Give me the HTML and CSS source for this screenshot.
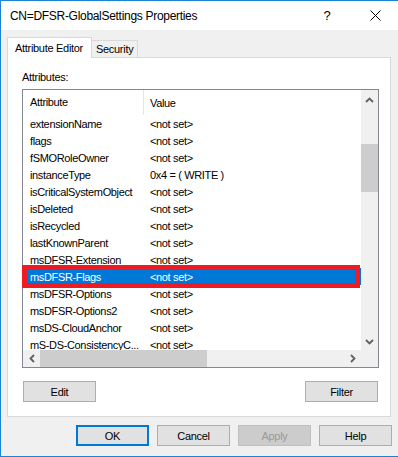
FILE: index.html
```html
<!DOCTYPE html>
<html lang="en">
<head>
  <meta charset="UTF-8">
  <title>CN=DFSR-GlobalSettings Properties</title>
  <link rel="stylesheet" href="styles.css">
</head>
<body>
  <div class="window">
    <!-- Title bar -->
    <div class="titlebar">
      <span class="title">CN=DFSR-GlobalSettings Properties</span>
      <span class="tb-btn tb-help">?</span>
      <span class="tb-btn">
        <svg width="11" height="11" viewBox="0 0 11 11"><path d="M0.5 0.5 L10.5 10.5 M10.5 0.5 L0.5 10.5" stroke="#000" stroke-width="1"/></svg>
      </span>
    </div>

    <div class="body">
      <div class="tabs">
        <div class="tab active">Attribute Editor</div>
        <div class="tab">Security</div>
      </div>

      <div class="panel">
        <div class="label">Attributes:</div>

        <div class="list">
          <div class="list-main">
            <div class="list-head">
              <div class="col-name">Attribute</div>
              <div class="col-value">Value</div>
            </div>
            <div class="rows">
              <div class="row"><div class="col-name">extensionName</div><div class="col-value">&lt;not set&gt;</div></div>
              <div class="row"><div class="col-name">flags</div><div class="col-value">&lt;not set&gt;</div></div>
              <div class="row"><div class="col-name">fSMORoleOwner</div><div class="col-value">&lt;not set&gt;</div></div>
              <div class="row"><div class="col-name">instanceType</div><div class="col-value">0x4 = ( WRITE )</div></div>
              <div class="row"><div class="col-name">isCriticalSystemObject</div><div class="col-value">&lt;not set&gt;</div></div>
              <div class="row"><div class="col-name">isDeleted</div><div class="col-value">&lt;not set&gt;</div></div>
              <div class="row"><div class="col-name">isRecycled</div><div class="col-value">&lt;not set&gt;</div></div>
              <div class="row"><div class="col-name">lastKnownParent</div><div class="col-value">&lt;not set&gt;</div></div>
              <div class="row"><div class="col-name">msDFSR-Extension</div><div class="col-value">&lt;not set&gt;</div></div>
              <div class="row selected"><div class="col-name">msDFSR-Flags</div><div class="col-value">&lt;not set&gt;</div></div>
              <div class="row"><div class="col-name">msDFSR-Options</div><div class="col-value">&lt;not set&gt;</div></div>
              <div class="row"><div class="col-name">msDFSR-Options2</div><div class="col-value">&lt;not set&gt;</div></div>
              <div class="row"><div class="col-name">msDS-CloudAnchor</div><div class="col-value">&lt;not set&gt;</div></div>
              <div class="row"><div class="col-name">mS-DS-ConsistencyC...</div><div class="col-value">&lt;not set&gt;</div></div>
            </div>
          </div>

          <div class="vscroll">
            <div class="sb-arrow up"><svg width="9" height="6" viewBox="0 0 9 6"><polyline points="1,5 4.5,1.5 8,5" fill="none" stroke="#606060" stroke-width="1.8"/></svg></div>
            <div class="sb-thumb-v"></div>
            <div class="sb-fill"></div>
            <div class="sb-arrow down"><svg width="9" height="6" viewBox="0 0 9 6"><polyline points="1,1 4.5,4.5 8,1" fill="none" stroke="#606060" stroke-width="1.8"/></svg></div>
          </div>

          <div class="hscroll">
            <div class="sb-arrow side"><svg width="6" height="9" viewBox="0 0 6 9"><polyline points="5,1 1.5,4.5 5,8" fill="none" stroke="#606060" stroke-width="1.8"/></svg></div>
            <div class="sb-thumb-h"></div>
            <div class="sb-fill"></div>
            <div class="sb-arrow side"><svg width="6" height="9" viewBox="0 0 6 9"><polyline points="1,1 4.5,4.5 1,8" fill="none" stroke="#606060" stroke-width="1.8"/></svg></div>
          </div>

          <div class="corner"></div>

          <!-- red annotation around the selected row -->
          <div class="highlight"></div>
        </div>

        <div class="panel-buttons">
          <button class="btn">Edit</button>
          <button class="btn">Filter</button>
        </div>
      </div>

      <div class="footer">
        <button class="btn default">OK</button>
        <button class="btn">Cancel</button>
        <button class="btn disabled">Apply</button>
        <button class="btn">Help</button>
      </div>
    </div>
  </div>
</body>
</html>
```

FILE: styles.css
```css
body {
  margin: 0;
  width: 398px;
  height: 457px;
  overflow: hidden;
  font-family: 'Liberation Sans', Arial, sans-serif;
  color: #000;
}
.window {
  height: 457px;
  box-sizing: border-box;
  border: 1px solid #1883d7;
  border-right: none;
  background: #f0f0f0;
  display: flex;
  flex-direction: column;
}

/* Title bar */
.titlebar {
  height: 29px;
  background: #fff;
  display: flex;
  align-items: center;
}
.title {
  flex: 1;
  padding-left: 9px;
  font-size: 12px;
  letter-spacing: -0.3px;
}
.tb-btn {
  width: 46px;
  height: 29px;
  display: flex;
  align-items: center;
  justify-content: center;
}
.tb-help {
  font-size: 13px;
  padding-right: 4px;
  box-sizing: border-box;
}

.body {
  flex: 1;
  padding: 7px 6px 0 6px;
}

/* Tabs */
.tabs {
  display: flex;
  align-items: flex-end;
  height: 20px;
}
.tab {
  box-sizing: border-box;
  height: 17px;
  width: 47px;
  margin-left: -1px;
  padding-left: 4px;
  border: 1px solid #d9d9d9;
  border-bottom: none;
  font-size: 11px;
  letter-spacing: -0.3px;
  line-height: 16px;
}
.tab.active {
  position: relative;
  z-index: 1;
  height: 21px;
  width: 85px;
  margin-left: 0;
  margin-bottom: -1px;
  padding-left: 7px;
  background: #fff;
  line-height: 20px;
}

.panel {
  box-sizing: border-box;
  width: 384px;
  height: 360px;
  background: #fff;
  border: 1px solid #d9d9d9;
}
.label {
  margin: 13px 0 5px 14px;
  font-size: 11px;
  letter-spacing: -0.3px;
  line-height: 13px;
}

/* List view */
.list {
  position: relative;
  box-sizing: border-box;
  margin-left: 14px;
  width: 357px;
  height: 279px;
  border: 1px solid #828790;
  display: grid;
  grid-template-columns: 1fr 17px;
  grid-template-rows: 1fr 17px;
  font-size: 11px;
  letter-spacing: -0.35px;
}
.list-head, .row {
  display: flex;
  align-items: center;
  white-space: nowrap;
}
.list-head {
  height: 25px;
}
.row {
  height: 17px;
}
.col-name {
  box-sizing: border-box;
  width: 121px;
  padding-left: 7px;
}
.list-head .col-name {
  height: 25px;
  line-height: 25px;
  border-right: 1px solid #e5e5e5;
}
.col-value {
  padding-left: 6px;
}
.rows {
  height: 235px;
  overflow: hidden;
}
.row.selected {
  background: #0078d7;
  color: #fff;
}

/* Scroll bars */
.vscroll, .hscroll, .corner {
  background: #f0f0f0;
}
.vscroll {
  display: flex;
  flex-direction: column;
}
.hscroll {
  display: flex;
}
.sb-arrow {
  display: flex;
  align-items: center;
  justify-content: center;
}
.sb-arrow.up {
  height: 20px;
}
.sb-arrow.down {
  height: 16px;
}
.sb-arrow.side {
  width: 17px;
}
.sb-fill {
  flex: 1;
}
.sb-thumb-v {
  margin-top: 34px;
  height: 48px;
  background: #cdcdcd;
}
.sb-thumb-h {
  width: 167px;
  background: #cdcdcd;
}

.highlight {
  position: absolute;
  left: -1px;
  top: 175px;
  width: 338px;
  height: 23px;
  box-sizing: border-box;
  border: 5px solid #ed1c24;
}

/* Buttons */
.btn {
  box-sizing: border-box;
  width: 73px;
  height: 21px;
  padding: 0;
  border: 1px solid #adadad;
  background: #e1e1e1;
  font-family: 'Liberation Sans', Arial, sans-serif;
  font-size: 11px;
  letter-spacing: -0.3px;
  color: #000;
}
.btn.default {
  border: 2px solid #0078d7;
}
.btn.disabled {
  background: #cccccc;
  border-color: #bfbfbf;
  color: #9a9a9a;
}
.panel-buttons {
  display: flex;
  justify-content: space-between;
  margin-top: 13px;
  padding: 0 12px 0 15px;
}
.footer {
  display: flex;
  justify-content: flex-end;
  gap: 8px;
  margin-top: 8px;
}
```
